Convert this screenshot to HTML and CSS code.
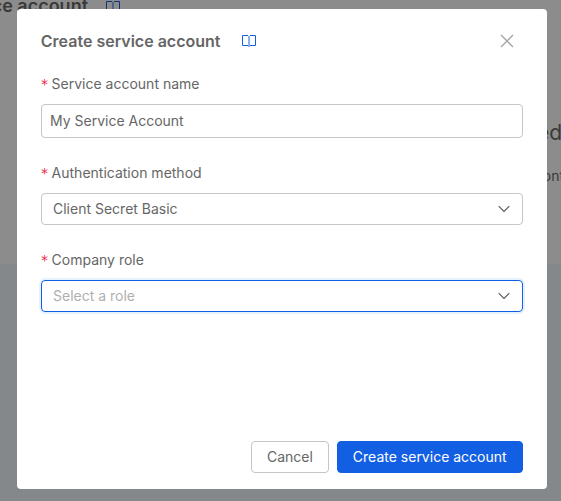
FILE: index.html
```html
<!DOCTYPE html>
<html lang="en">
<head>
<meta charset="utf-8">
<title>Create service account</title>
<link rel="stylesheet" href="styles.css">
</head>
<body>
<div class="page">
  <header class="page-header">
    <div class="page-title"><span>Service account</span></div>
    <svg class="book" width="14" height="12" viewBox="0 0 14 12"><path d="M6.5 1V11M7.5 1V11" opacity=".45"/><path d="M6 .5H.5V10.5H6M8 .5H13.5V10.5H8"/></svg>
  </header>
  <div class="empty-title">ed</div>
  <div class="empty-text">ont</div>
</div>
<div class="overlay">
  <section class="modal">
    <header class="modal-header">
      <h1>Create service account</h1>
      <svg class="book" width="14" height="12" viewBox="0 0 14 12"><path d="M6.5 1V12M7.5 1V12" opacity=".5"/><path d="M6 .5H.5V10.5H6M8 .5H13.5V10.5H8"/></svg>
      <svg class="close" width="14" height="14" viewBox="0 0 14 14"><path d="M1 1L13 13M13 1L1 13"/></svg>
    </header>
    <form class="form">
      <label><i>*</i>Service account name</label>
      <div class="field input">My Service Account</div>
      <label><i>*</i>Authentication method</label>
      <div class="field select">Client Secret Basic
        <svg class="chevron" width="12" height="8" viewBox="0 0 12 8"><path d="M.7 1.2L6 6.5L11.3 1.2"/></svg>
      </div>
      <label><i>*</i>Company role</label>
      <div class="field select focused"><span>Select a role</span>
        <svg class="chevron" width="12" height="8" viewBox="0 0 12 8"><path d="M.7 1.2L6 6.5L11.3 1.2"/></svg>
      </div>
    </form>
    <footer class="actions">
      <div class="button">Cancel</div>
      <div class="button primary">Create service account</div>
    </footer>
  </section>
</div>
</body>
</html>
```

FILE: styles.css
```css
* { box-sizing: border-box; }
body {
  margin: 0;
  width: 561px;
  height: 501px;
  overflow: hidden;
  font-family: Inter, "Liberation Sans", sans-serif;
  font-size: 14px;
  line-height: 22px;
  color: #666;
}
svg { fill: none; flex: none; }
.book { stroke: #125fe3; }
.page {
  height: 501px;
  background: linear-gradient(#8c8c8c 264px, #84888b 264px);
  color: #393939;
  overflow: hidden;
}
.page-header { display: flex; gap: 18px; height: 122px; }
.page-header .book { stroke: #0a347d; margin-top: 1px; }
.page-title {
  display: flex;
  justify-content: flex-end;
  width: 88px;
  margin-top: -5px;
  font-size: 18px;
  font-weight: 600;
  white-space: nowrap;
}
.empty-title { margin-right: -1px; text-align: right; font-size: 21px; height: 43px; }
.empty-text { text-align: right; margin-right: -3px; color: #383838; }
.overlay { position: absolute; inset: 0; padding: 9px 14px 12px 17px; }
.modal {
  display: flex;
  flex-direction: column;
  height: 480px;
  padding: 18px 24px 16px;
  border-radius: 4px;
  background: #fff;
}
.modal-header { display: flex; align-items: center; height: 28px; }
h1 {
  width: 201px;
  margin: 0;
  font-size: 16px;
  font-weight: 600;
  text-indent: -0.2px;
  white-space: nowrap;
}
.close { margin: 0 9px 0 auto; stroke: #a3a3a3; stroke-width: 1.3; }
.form { display: flex; flex-direction: column; margin-top: 18px; }
label { display: flex; height: 31px; }
label i {
  width: 10.6px;
  font-family: "DejaVu Sans", sans-serif;
  font-style: normal;
  color: #f02848;
}
.field {
  display: flex;
  align-items: center;
  border: 1px solid #c6c6c6;
  border-radius: 4px;
}
.input { height: 34px; margin-bottom: 24px; padding: 0 8px; }
.select {
  justify-content: space-between;
  height: 32px;
  margin-bottom: 24px;
  padding: 0 12px 0 11px;
}
.focused { border-color: #125fe3; box-shadow: 0 0 0 2px #e6f3ff; color: #b0b0b0; }
.chevron { stroke: #555; stroke-width: 1.1; }
.actions { display: flex; justify-content: flex-end; gap: 8px; margin-top: auto; }
.button {
  height: 32px;
  padding: 4px 15.4px 4px 14.6px;
  border: 1px solid #c6c6c6;
  border-radius: 4px;
}
.primary { border-color: #125fe3; background: #125fe3; color: #fff; }
```
